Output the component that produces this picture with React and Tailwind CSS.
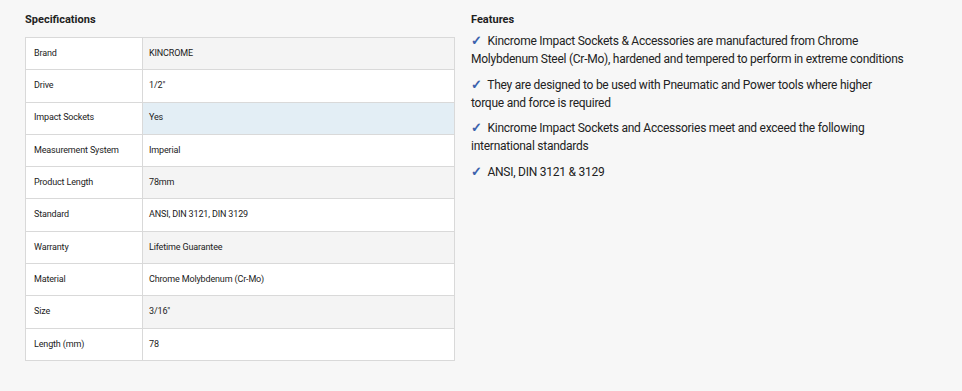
const specs = [
  ['Brand', 'KINCROME'],
  ['Drive', '1/2"'],
  ['Impact Sockets', 'Yes'],
  ['Measurement System', 'Imperial'],
  ['Product Length', '78mm'],
  ['Standard', 'ANSI, DIN 3121, DIN 3129'],
  ['Warranty', 'Lifetime Guarantee'],
  ['Material', 'Chrome Molybdenum (Cr-Mo)'],
  ['Size', '3/16"'],
  ['Length (mm)', '78'],
]

// line breaks kept as in the source layout
const features = [
  ['Kincrome Impact Sockets & Accessories are manufactured from Chrome', 'Molybdenum Steel (Cr-Mo), hardened and tempered to perform in extreme conditions'],
  ['They are designed to be used with Pneumatic and Power tools where higher', 'torque and force is required'],
  ['Kincrome Impact Sockets and Accessories meet and exceed the following', 'international standards'],
  ['ANSI, DIN 3121 & 3129'],
]

export default function App() {
  return (
    <div className="min-h-[391px] bg-[#f7f7f7] text-[#222] font-['Roboto',sans-serif]">
      <div className="flex gap-4 pl-[25px] pt-[13px]">
        {/* Specifications */}
        <div className="w-[430px] shrink-0">
          <h3 className="text-[11px] font-bold leading-[14px] mb-[10px]">Specifications</h3>
          <table className="w-full border-collapse text-[9px] tracking-[-0.15px]">
            <tbody>
              {specs.map(([label, value], i) => (
                <tr key={label}>
                  <td className="w-[117px] h-[32.3px] border border-[#d9d9d9] bg-white px-[8px]">{label}</td>
                  <td
                    className={`h-[32.3px] border border-[#d9d9d9] px-[6px] ${
                      label === 'Impact Sockets' ? 'bg-[#e3eef5]' : i % 2 === 0 ? 'bg-[#f4f4f4]' : 'bg-white'
                    }`}
                  >
                    {value}
                  </td>
                </tr>
              ))}
            </tbody>
          </table>
        </div>

        {/* Features */}
        <div className="w-[470px]">
          <h3 className="text-[11px] font-bold leading-[14px] mb-[5px]">Features</h3>
          {features.map(([first, second]) => (
            <p key={first} className="text-[12px] leading-[18px] tracking-[-0.25px] mb-[7.5px] whitespace-nowrap">
              <span className="text-[#3d62ad] font-bold text-[13px] mr-[3px]">✓</span> {first}
              {second && (
                <>
                  <br />
                  {second}
                </>
              )}
            </p>
          ))}
        </div>
      </div>
    </div>
  )
}
